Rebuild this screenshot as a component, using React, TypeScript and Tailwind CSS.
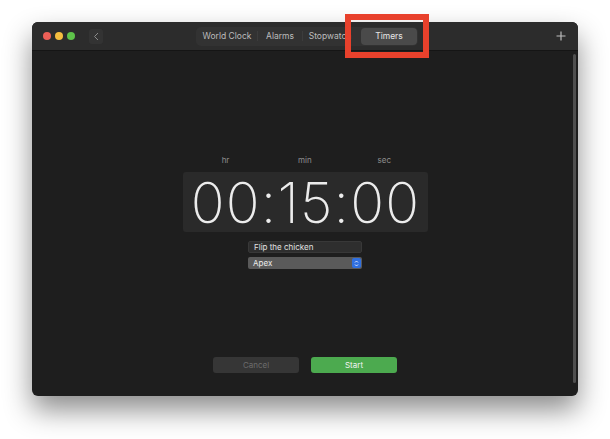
import React from "react";

const font = { fontFamily: "Inter, 'Noto Sans', sans-serif" };

function TrafficLights() {
  return (
    <div className="flex items-center gap-[4px]">
      <span className="block w-[8px] h-[8px] rounded-full bg-[#ec5f57]" />
      <span className="block w-[8px] h-[8px] rounded-full bg-[#f4bd3f]" />
      <span className="block w-[8px] h-[8px] rounded-full bg-[#5ec34a]" />
    </div>
  );
}

function Segments() {
  const items = ["World Clock", "Alarms", "Stopwatch", "Timers"];
  return (
    <div className="flex items-center h-[19px] rounded-[5px] bg-[#323232] px-[1px]">
      {items.map((t, i) => {
        const active = t === "Timers";
        return (
          <div key={t} className="flex items-center h-full">
            {i > 0 && !active && (
              <span className="block w-px h-[10px] bg-[#3c3c3c]" />
            )}
            <div
              className={
                "h-[17px] flex items-center justify-center text-[8.5px] rounded-[4px] " +
                (active
                  ? "bg-[#4a4a4a] text-[#e6e6e6] w-[56px] ml-[4px]"
                  : "text-[#bdbdbd]")
              }
              style={
                active
                  ? undefined
                  : { width: i === 0 ? 60 : i === 1 ? 44 : 54 }
              }
            >
              {t}
            </div>
          </div>
        );
      })}
    </div>
  );
}

export default function App() {
  return (
    <div className="w-[610px] h-[439px] bg-white relative overflow-hidden" style={font}>
      <div className="pt-[22px] pl-[32px]">
        <div className="w-[546px] h-[374px] rounded-[6px] bg-[#1e1e1e] flex flex-col overflow-hidden shadow-[0_14px_28px_rgba(0,0,0,0.45)]">
          {/* title bar */}
          <div className="h-[29px] bg-[#2c2c2c] border-b border-[#151515] flex items-center relative">
            <div className="pl-[11px]">
              <TrafficLights />
            </div>
            <div className="ml-[14px] w-[14px] h-[15px] rounded-[3px] bg-[#333] flex items-center justify-center">
              <svg width="6" height="9" viewBox="0 0 6 9">
                <path d="M5 1 L1.5 4.5 L5 8" stroke="#8a8a8a" strokeWidth="1" fill="none" />
              </svg>
            </div>
            <div className="ml-[93px]">
              <Segments />
            </div>
            <div className="ml-auto mr-[11px] w-[12px] h-[12px] flex items-center justify-center">
              <svg width="10" height="10" viewBox="0 0 10 10">
                <path d="M5 0.5 V9.5 M0.5 5 H9.5" stroke="#bdbdbd" strokeWidth="1.2" />
              </svg>
            </div>
          </div>

          {/* content */}
          <div className="flex-1 flex relative">
            <div className="flex-1 ml-[8px] flex flex-col items-center pt-[105px]">
              <div className="w-[245px] flex justify-between px-[40px] text-[8px] text-[#8e8e8e] leading-none">
                <span className="w-[10px] text-center ml-[-2px]">hr</span>
                <span className="w-[12px] text-center">min</span>
                <span className="w-[12px] text-center mr-[-2px]">sec</span>
              </div>
              <div className="mt-[8px] w-[245px] h-[60px] rounded-[3px] bg-[#2a2a2a] flex items-center justify-center">
                <span className="text-[56px] leading-none font-extralight text-[#ececec] tracking-[1.2px] mt-[1px] ml-[1px]">
                  00:15:00
                </span>
              </div>
              <div className="mt-[9px] w-[114px] h-[12px] rounded-[2px] bg-[#2e2e2e] border border-[#383838] flex items-center px-[5px] text-[8px] text-[#e2e2e2] leading-none">
                Flip the chicken
              </div>
              <div className="mt-[4px] w-[114px] h-[12px] rounded-[2px] bg-[#5a5a5a] flex items-center pl-[5px] pr-[1px] text-[8px] text-[#ececec] leading-none">
                <span className="flex-1">Apex</span>
                <span className="w-[9px] h-[10px] rounded-[2px] bg-[#2f6fe0] flex items-center justify-center">
                  <svg width="5" height="7" viewBox="0 0 5 7">
                    <path d="M1 2.5 L2.5 1 L4 2.5 M1 4.5 L2.5 6 L4 4.5" stroke="#fff" strokeWidth="0.8" fill="none" />
                  </svg>
                </span>
              </div>
              <div className="mt-[88px] flex gap-[12px]">
                <div className="w-[86px] h-[16px] rounded-[3px] bg-[#363636] text-[8px] text-[#6c6c6c] flex items-center justify-center">
                  Cancel
                </div>
                <div className="w-[86px] h-[16px] rounded-[3px] bg-[#4caa4f] text-[8px] text-[#f2f2f2] flex items-center justify-center">
                  Start
                </div>
              </div>
            </div>
            {/* scroll bar */}
            <div className="w-[8px] flex justify-center pt-[3px] pb-[13px]">
              <div className="w-[3px] h-full rounded-full bg-[#4f4f4f]" />
            </div>
          </div>
        </div>
      </div>

      {/* highlight frame around the Timers tab */}
      <div className="absolute left-[345px] top-[14px] w-[84px] h-[44px] border-[6px] border-[#e8412c]" />
    </div>
  );
}
